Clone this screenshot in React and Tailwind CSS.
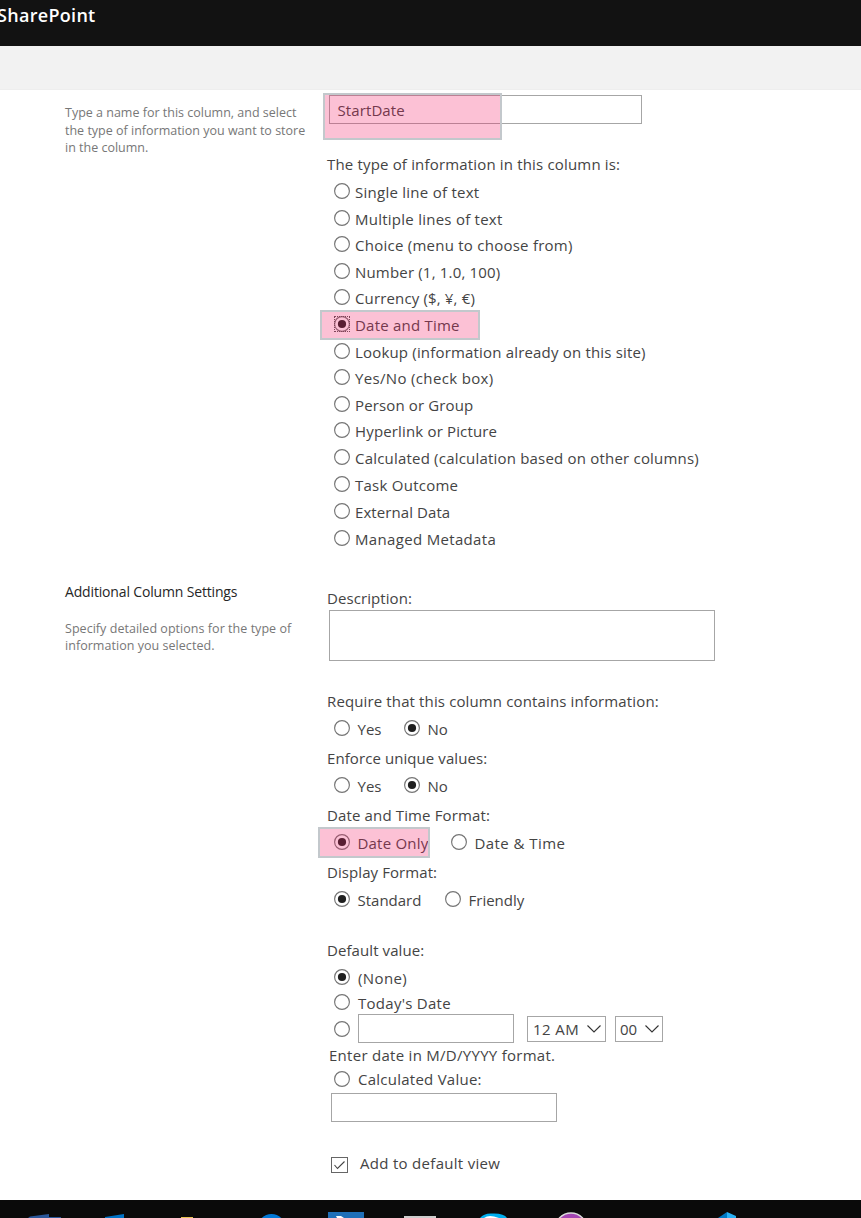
const highlight =
  "pointer-events-none absolute border-2 border-[#c3c8cc] bg-[rgba(244,30,103,0.276)]";

function Dot({ on, focus, className = "" }) {
  return (
    <span className={`relative size-4 shrink-0 ${className}`}>
      <svg className="block" width="16" height="16" viewBox="0 0 16 16">
        <circle cx="8" cy="8" r="7.4" fill="#fff" stroke="#757575" strokeWidth="1.15" />
        {on && <circle cx="8" cy="8" r="4.1" fill="#1f1f1f" />}
      </svg>
      {focus && <span className="absolute inset-0 border border-dotted border-[#555]" />}
    </span>
  );
}

function Label({ children, className = "" }) {
  return <div className={`flex items-center ${className}`}>{children}</div>;
}

const types = [
  ["Single line of text", "h-[27px]", "tracking-[0.26px]"],
  ["Multiple lines of text", "h-[26px]", "tracking-[0.25px]"],
  ["Choice (menu to choose from)", "h-[27px]", "tracking-[0.25px]"],
  ["Number (1, 1.0, 100)", "h-[26px]", "tracking-[0.18px]"],
  ["Currency ($, ¥, €)", "h-[27px]", "tracking-[0.15px]"],
  ["Date and Time", "h-[27px]", "tracking-[0.22px]"],
  ["Lookup (information already on this site)", "h-[26px]", "tracking-[0.18px]"],
  ["Yes/No (check box)", "h-[27px]", "tracking-[0.34px]"],
  ["Person or Group", "h-[26px]", "tracking-[0.13px]"],
  ["Hyperlink or Picture", "h-[27px]", "tracking-[0.16px]"],
  ["Calculated (calculation based on other columns)", "h-[27px]", "tracking-[0.2px]"],
  ["Task Outcome", "h-[27px]", "tracking-[0.25px]"],
  ["External Data", "h-[27px]", "tracking-[0.08px]"],
  ["Managed Metadata", "h-[27px]", "tracking-[0.33px]"],
];

function Pair({ title, a, b, on, gap, tracking = "", bTracking = "", marked }) {
  return (
    <div className="h-[57px]">
      <Label className={`h-7 ${tracking}`}>{title}</Label>
      <div className="relative flex h-[26px] items-center pl-[7px]">
        <Dot on={on === 0} />
        <span className={`relative top-px ml-[7.5px] ${marked ? "tracking-[0.2px]" : ""}`}>{a}</span>
        <span className={`flex items-center ${gap}`}>
          <Dot on={on === 1} />
          <span className={`relative top-px ml-[7.5px] ${bTracking}`}>{b}</span>
        </span>
        {marked && <span className={`${highlight} -left-[9px] -top-[2px] h-[31px] w-28`} />}
      </div>
    </div>
  );
}

function Chevron() {
  return (
    <svg className="-mt-px" width="14" height="8" viewBox="0 0 14 8" fill="none" stroke="#333" strokeWidth="1.1">
      <path d="M.5 .5 7 7 13.500 .5" />
    </svg>
  );
}

const field = "border border-[#a6a6a6] bg-white";

export default function App() {
  return (
    <div className="flex h-[1218px] w-[861px] flex-col overflow-hidden bg-white font-['Open_Sans','Noto_Sans',sans-serif] text-[15px] leading-5 text-[#444]">
      <header className="h-[46px] shrink-0 bg-[#121212]">
        <div className="-ml-[3px] pt-[5px] text-[18px] font-semibold leading-5 tracking-[0.3px] text-white">SharePoint</div>
      </header>
      <div className="h-11 shrink-0 border-b border-[#eee] bg-[#f2f2f2]" />
      <main className="flex h-[1110px] shrink-0">
        <aside className="w-[327px] shrink-0 pl-[65px] text-[12.5px] leading-[17.5px] text-[#777]">
          <div className="h-[493px] pt-[14px]">
            Type a name for this column, and select
            <br />
            the type of information you want to store
            <br />
            in the column.
          </div>
          <div className="text-[14px] leading-[18px] tracking-[-0.16px] text-[#262626]">Additional Column Settings</div>
          <div className="pt-[18.5px] tracking-[0.04px]">
            Specify detailed options for the type of
            <br />
            information you selected.
          </div>
        </aside>
        <section className="w-[500px]">
          <div className="relative h-[62px] pl-[2px] pt-[5px]">
            <div className={`${field} flex h-[29px] w-[313px] items-center pl-[7.5px] tracking-[0.1px]`}>StartDate</div>
            <span className={`${highlight} -left-1 top-[3px] h-[47px] w-[179px]`} />
          </div>
          <Label className="h-[26px] pb-[2px] tracking-[0.17px]">The type of information in this column is:</Label>
          {types.map(([t, height, tracking], i) => (
            <div key={t} className={`relative flex items-start pl-[7px] ${height}`}>
              <Dot on={i === 5} focus={i === 5} className="mt-[5px]" />
              <span className={`ml-[5px] mt-1 ${tracking}`}>{t}</span>
              {i === 5 && <span className={`${highlight} -left-[7px] -top-[1px] h-[30px] w-40`} />}
            </div>
          ))}
          <Label className="mt-[34px] h-6 tracking-[0.08px]">Description:</Label>
          <div className={`${field} ml-[2px] h-[51px] w-[386px]`} />
          <div className="pt-[26px]">
            <Pair title="Require that this column contains information:" a="Yes" b="No" on={1} gap="ml-[22.6px]" tracking="tracking-[0.13px]" />
            <Pair title="Enforce unique values:" a="Yes" b="No" on={1} gap="ml-[22.6px]" tracking="tracking-[0.08px]" />
            <Pair
              title="Date and Time Format:"
              a="Date Only"
              b="Date & Time"
              on={0}
              gap="ml-[22.6px]"
              tracking="tracking-[0.14px]"
              bTracking="tracking-[0.45px]"
              marked
            />
            <Pair title="Display Format:" a="Standard" b="Friendly" on={0} gap="ml-[23.6px]" tracking="tracking-[0.08px]" />
          </div>
          <Label className="mt-[21px] h-7 tracking-[0.08px]">Default value:</Label>
          <div className="flex h-[26px] items-center gap-2 pl-[7px]">
            <Dot on />
            <span className="relative top-px tracking-[0.4px]">(None)</span>
          </div>
          <div className="flex h-6 items-center gap-2 pl-[7px]">
            <Dot />
            <span className="relative top-px tracking-[0.27px]">Today's Date</span>
          </div>
          <div className="flex h-[29px] items-center pl-[7px]">
            <Dot className="mt-px" />
            <div className={`${field} ml-2 h-[29px] w-[156px]`} />
            <div className={`${field} ml-[13px] mt-px flex h-[26px] w-[79px] items-center justify-between pl-[5px] pr-1`}>
              <span className="tracking-[0.4px]">12 AM</span>
              <Chevron />
            </div>
            <div className={`${field} ml-[9px] mt-px flex h-[26px] w-12 items-center justify-between pl-1 pr-[3px]`}>
              <span>00</span>
              <Chevron />
            </div>
          </div>
          <Label className="h-6 pl-[2px] tracking-[0.28px]">Enter date in M/D/YYYY format.</Label>
          <div className="flex h-6 items-center gap-2 pl-[7px]">
            <Dot />
            <span className="tracking-[0.25px]">Calculated Value:</span>
          </div>
          <div className={`${field} ml-1 mt-[2px] h-[29px] w-[226px]`} />
          <div className="mt-[29px] flex h-[26px] items-start pl-1">
            <span className="mt-[6px] flex h-4 w-[17px] items-center justify-center border border-[#666]">
              <svg width="13" height="13" viewBox="0 0 13 13" fill="none" stroke="#444" strokeWidth="1.1">
                <path d="m1.500 6 3 3.500L11.500 2.500" />
              </svg>
            </span>
            <span className="ml-3 mt-[2px] tracking-[0.3px]">Add to default view</span>
          </div>
        </section>
      </main>
      <footer className="h-[18px] shrink-0 bg-[#0a0a0a]">
        <svg width="861" height="18" viewBox="0 0 861 18">
          <path d="M30 16.500 49 14V17H61V18H28Z" fill="#2b579a" />
          <path d="M105 17 124 14V18H105Z" fill="#0072c6" />
          <path d="M181 17H193V18H181Z" fill="#e8c252" />
          <circle cx="271.500" cy="28" r="14" fill="#0078d7" />
          <path d="M328 12H364V18H328Z" fill="#1f6fb8" />
          <path d="M336 16H341L344 18H337Z" fill="#fff" />
          <path d="M404 16H436V18H404Z" fill="#ccc" />
          <path d="M480 18Q484 13 492 13.500 504 13 507 18Z" fill="#00aff0" />
          <path d="M484 18Q488 15 494 16.500L499 18Z" fill="#fff" />
          <circle cx="571" cy="29" r="16" fill="#a445b2" stroke="#ddd" strokeWidth="1.500" />
          <path d="M718 18 727 12V18Z" fill="#0078c4" />
          <path d="M727 12 736 16V18H727Z" fill="#29b0f5" />
        </svg>
      </footer>
    </div>
  );
}
